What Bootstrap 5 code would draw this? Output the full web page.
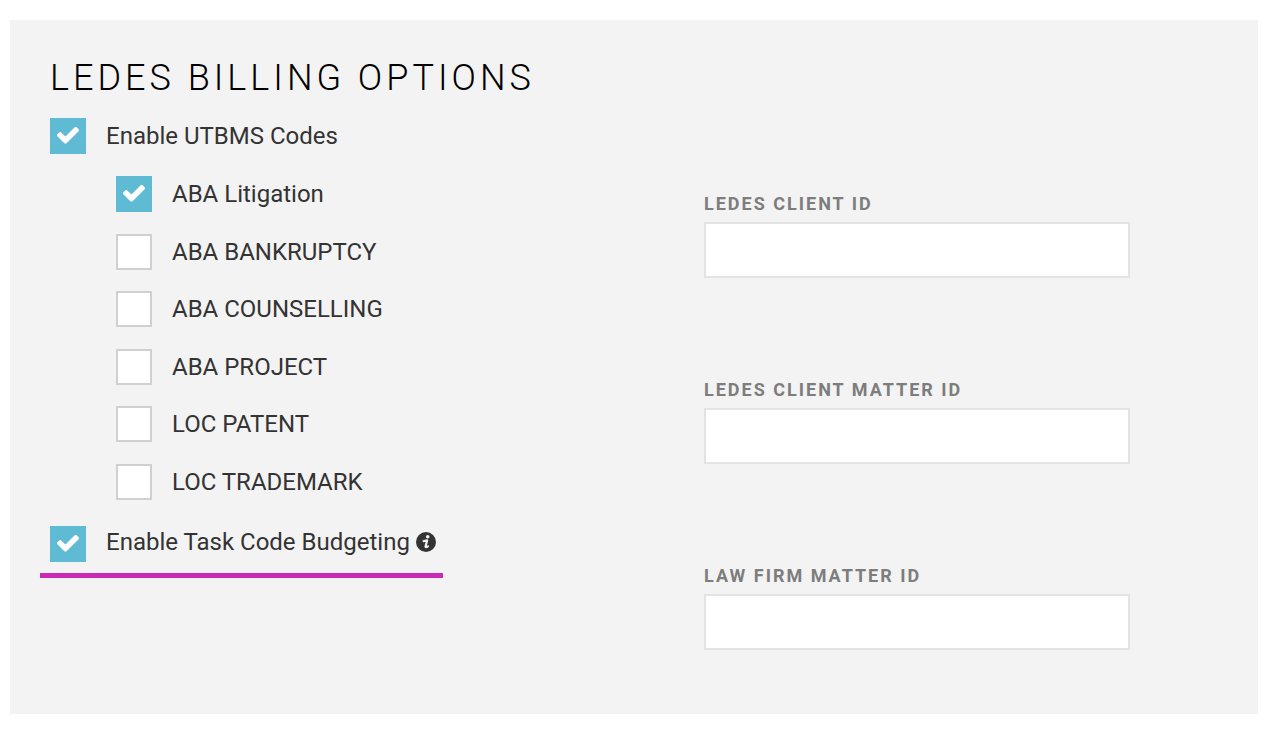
<!DOCTYPE html>
<html lang="en">
<head>
<meta charset="utf-8">
<meta name="viewport" content="width=device-width, initial-scale=1">
<title>LEDES Billing Options</title>
<link href="https://cdn.jsdelivr.net/npm/bootstrap@5.3.0/dist/css/bootstrap.min.css" rel="stylesheet">
<style>
  body { font-family: Roboto, sans-serif; color: #333; background: #fff; padding: 20px 10px; }
  .panel { background: #f3f3f3; padding: 36px 0 64px; }
  .panel-title { font-size: 36px; line-height: 44px; font-weight: 300; letter-spacing: 4px; color: #000; padding-left: 40px; }
  .options { padding: 18px 0 0 40px; }
  .option { display: flex; align-items: center; gap: 20px; min-height: 36px; margin: 0; padding: 0; font-size: 24px; line-height: 36px; }
  .option .form-check-input { flex: none; width: 36px; height: 36px; margin: 0; border: 2px solid #d0d0d0; border-radius: 0; background-color: #fff; }
  .option .form-check-input:checked {
    background-color: #5fbad3; border-color: #5fbad3; background-size: 32px 32px;
    background-image: url("data:image/svg+xml,%3Csvg xmlns='http://www.w3.org/2000/svg' viewBox='-231 -150 2254 2254'%3E%3Cpath fill='%23fff' d='M1671 566q0 40-28 68l-724 724-136 136q-28 28-68 28t-68-28l-136-136-362-362q-28-28-28-68t28-68l136-136q28-28 68-28t68 28l294 295 656-657q28-28 68-28t68 28l136 136q28 28 28 68z'/%3E%3C/svg%3E");
  }
  .suboptions { min-height: 324px; margin: 22px 0 26px; padding-left: 66px; }
  .marked { align-items: flex-start; line-height: 32px; width: fit-content; margin-left: -10px; padding: 0 7px 11px 10px; border-bottom: 5px solid #ca2bb5; }
  .label-line { gap: 6px; }
  .fields { padding: 94px 128px 0 70px; gap: 102px; }
  .fields .form-label { display: block; font-size: 18px; line-height: 20px; font-weight: 700; letter-spacing: 2px; color: #7d7d7d; margin-bottom: 8px; }
  .fields .form-control { height: 56px; border: 2px solid #e3e3e3; border-radius: 0; font-size: 24px; }
</style>
</head>
<body>
<main class="panel">
  <h1 class="panel-title mb-0">LEDES BILLING OPTIONS</h1>
  <form class="row g-0">
    <div class="col-6 options">
      <div class="option"><input class="form-check-input" type="checkbox" id="utbms" checked><label for="utbms">Enable UTBMS Codes</label></div>
      <div class="suboptions d-flex flex-column justify-content-between">
        <div class="option"><input class="form-check-input" type="checkbox" id="lit" checked><label for="lit">ABA Litigation</label></div>
        <div class="option"><input class="form-check-input" type="checkbox" id="bank"><label for="bank">ABA BANKRUPTCY</label></div>
        <div class="option"><input class="form-check-input" type="checkbox" id="couns"><label for="couns">ABA COUNSELLING</label></div>
        <div class="option"><input class="form-check-input" type="checkbox" id="proj"><label for="proj">ABA PROJECT</label></div>
        <div class="option"><input class="form-check-input" type="checkbox" id="patent"><label for="patent">LOC PATENT</label></div>
        <div class="option"><input class="form-check-input" type="checkbox" id="trade"><label for="trade">LOC TRADEMARK</label></div>
      </div>
      <div class="option marked">
        <input class="form-check-input" type="checkbox" id="budget" checked>
        <div class="label-line d-flex align-items-center">
          <label for="budget">Enable Task Code Budgeting</label>
          <svg width="20" height="20" viewBox="0 0 20 20" role="img" aria-label="Information">
            <circle cx="10" cy="10" r="10" fill="#333"/>
            <circle cx="11.7" cy="4.8" r="1.8" fill="#f3f3f3"/>
            <path d="M7.6 9.1L11.2 8.4L9.5 14.4Q9.3 16 12 14.3" fill="none" stroke="#f3f3f3" stroke-width="2.1" stroke-linecap="round" stroke-linejoin="round"/>
          </svg>
        </div>
      </div>
    </div>
    <div class="col-6 fields d-flex flex-column">
      <div><label class="form-label" for="client">LEDES CLIENT ID</label><input class="form-control" type="text" id="client"></div>
      <div><label class="form-label" for="matter">LEDES CLIENT MATTER ID</label><input class="form-control" type="text" id="matter"></div>
      <div><label class="form-label" for="firm">LAW FIRM MATTER ID</label><input class="form-control" type="text" id="firm"></div>
    </div>
  </form>
</main>
<script src="https://cdn.jsdelivr.net/npm/bootstrap@5.3.0/dist/js/bootstrap.bundle.min.js"></script>
</body>
</html>
